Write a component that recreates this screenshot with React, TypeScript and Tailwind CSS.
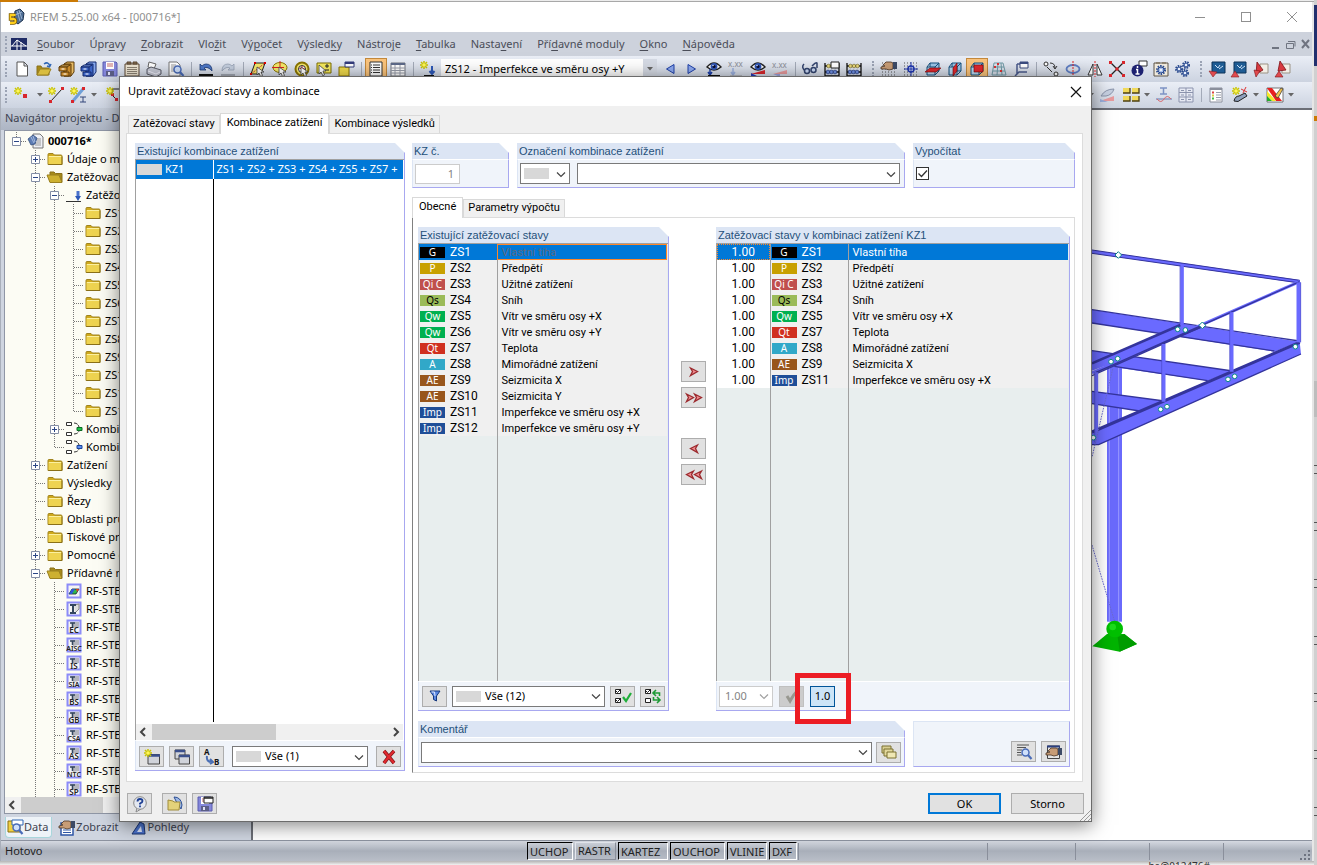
import type { ReactNode } from "react";
import clsx from "clsx";

const NOTO = "font-['Noto_Sans','Open_Sans',sans-serif]";
const ARIAL = "font-['Liberation_Sans',Arial,sans-serif]";
const ROBOTO = "font-['Roboto','Noto_Sans',sans-serif]";

/* ---------- icons ---------- */

const star = (
  <path d="M4 0v8M0 4h8M1 1l6 6M7 1L1 7" stroke="#c9c400" strokeWidth="1.5" />
);

const starBright = (
  <>
    {star}
    <circle cx="4" cy="4" r="1.8" fill="#fff75a" />
  </>
);

const cube = (
  <>
    <path d="M5 2h9v8H5z" fill="#9cc6e8" stroke="#15507e" />
    <path d="M2 6h8v8H2z" fill="#b9d8f0" stroke="#15507e" />
    <path d="M2 6l3-4M10 6l4-4M10 14l4-4" stroke="#15507e" />
  </>
);

const eye = (
  <>
    <path d="M1 6q7-8 14 0q-7 6-14 0z" fill="#fff" stroke="#222" strokeWidth="1.4" />
    <circle cx="8" cy="5.5" r="3.4" fill="#2f55b5" />
    <circle cx="8" cy="5.5" r="1.5" fill="#0a0a2a" />
    <circle cx="7" cy="4.5" r=".8" fill="#cfe0ff" />
  </>
);

/* filing cabinet with an upper drawer pulled out */
const cabinet = (front: string, top: string, line: string) => (
  <>
    <path d="M6 3l3-2h7v10l-3 4H6z" fill={top} stroke={line} />
    <path d="M6 3h7v12H6z" fill={front} stroke={line} />
    <path d="M1 6l3-2h8L9 6z" fill={top} stroke={line} />
    <path d="M1 6h8v4H1z" fill={front} stroke={line} />
    <path d="M3 11h8v4H3z" fill={front} stroke={line} />
    <path d="M3.500 8h3M5.500 13h3" stroke="#fff" strokeWidth="1.200" />
  </>
);

const gear = (x: number, y: number, r: number) => (
  <>
    <circle cx={x} cy={y} r={r} fill="none" stroke="#2b4b8f" strokeWidth="2" strokeDasharray="1.5 1" />
    <circle cx={x} cy={y} r={r - 1} fill="#a9c0ea" stroke="#2b4b8f" />
    <circle cx={x} cy={y} r="1" fill="#fff" />
  </>
);

const floppy = (
  <>
    <path d="M1 1h13l1 1v13H1z" fill="#8487da" stroke="#5a5cb0" />
    <path d="M4 1h8v7H4z" fill="#fff" />
    <path d="M5 3h6M5 5h6" stroke="#c26a6a" />
    <path d="M4 10h8v5H4z" fill="#5b5e86" />
    <path d="M6 11h2v3H6z" fill="#dfe1f5" />
  </>
);

const folder = (
  <>
    <path d="M1 3.500q0-1 1-1h4l1.500 1.500H14q1 0 1 1v8.500H1z" fill="#cfa91c" stroke="#a08420" />
    <path d="M1.500 5h13v8h-13z" fill="#eed350" />
    <path d="M2 5.500h12" stroke="#fbf0a0" />
    <path d="M1.500 13.500h13.500v-8" stroke="#8a7018" />
  </>
);

const folderOpen = (
  <>
    <path d="M3 3h4l1.500 1.500H15V13H3z" fill="#a68a1a" stroke="#8a7018" />
    <path d="M0 6h12l3 7.500H3z" fill="#cdb030" stroke="#9a8020" />
  </>
);

const magnifier = (
  <>
    <circle cx="9.500" cy="8.500" r="3.500" fill="#cfe0fb" stroke="#4a6cb8" strokeWidth="1.500" />
    <path d="M12 11l3.500 4" stroke="#4a6cb8" strokeWidth="2.200" />
  </>
);

const abacus = (
  <>
    <path d="M1 2v14M15 2v14M1 5h14M1 11h14M1 15h14" stroke="#111" strokeWidth="1.300" />
    {[3.5, 7, 10.5].map((x) => (
      <g key={x}>
        <circle cx={x + 1} cy="5" r="1.800" fill="#e8d87a" stroke="#6b6020" strokeWidth=".6" />
        <circle cx={x + 0.5} cy="11" r="1.900" fill="#6f8fe0" stroke="#1c2f70" strokeWidth=".6" />
      </g>
    ))}
  </>
);

const dots = (
  <path d="M1 2h15M1 5h15M1 8h15M1 11h15M1 14h15" stroke="#555" strokeDasharray="1 2" />
);

const hand = (
  <>
    <path d="M5 1h5l2 1v6l-4 1L5 8L0 8V6l4-1l-2-1z" fill="#c79c76" stroke="#4a3423" strokeWidth=".8" />
    <path d="M12 1h4v7h-4z" fill="#3c4a66" />
  </>
);

const cursor = <path d="M7 6v8l2-2l1.500 3.500l2-1L11 11h3z" fill="#fff" stroke="#444" strokeWidth=".8" />;

const ICONS: Record<string, ReactNode> = {
  app: (
    <>
      <path d="M6 2l5-2l4 4l-1 7l-5 4l-4-3z" fill="#4d6c94" stroke="#1f3450" />
      <path d="M8 2l3 10M10 1l3 9M6 6l7-3" stroke="#a9bfda" strokeWidth=".8" />
      <path d="M6.500 6H1.500v4h3.500q1.500 0 1.500 2t-2 2H1" fill="none" stroke="#7a5a00" strokeWidth="3.400" />
      <path d="M6.500 6H1.500v4h3.500q1.500 0 1.500 2t-2 2H1" fill="none" stroke="#ffcf1c" strokeWidth="1.800" />
    </>
  ),
  new: <path d="M3 1h7l3.500 3.500V15H3zM10 1v4h3.500" fill="#fff" stroke="#555" />,
  open: (
    <>
      <path d="M1 5h4l1 2h7v7H1z" fill="#a68a1a" stroke="#8a7018" />
      <path d="M1 14l3-6h11l-3 6z" fill="#d9bd40" stroke="#9a8020" />
      <path d="M8 3q4-3 6 2l1-2M14 6l-3-1" fill="none" stroke="#2f66b5" strokeWidth="1.500" />
    </>
  ),
  cabOrange: cabinet("#c98b2c", "#e8bb64", "#5a3a0a"),
  cabBlue: cabinet("#3b63c4", "#86a8ee", "#13296b"),
  save: floppy,
  clipboard: (
    <>
      <path d="M1 3h14v12H1z" fill="#efe6d3" stroke="#5a4632" />
      <path d="M3 1h4v2H3zM9 1h4v2H9z" fill="#8b7355" stroke="#5a4632" />
      <path d="M3 6.500h10M3 8.500h10M3 10.500h10M3 12.500h10" stroke="#8d8374" />
    </>
  ),
  print: (
    <>
      <path d="M3 1l7 2l-2 5l-6-2z" fill="#fff" stroke="#666" />
      <path d="M1 8l4-2l10 3v4l-5 3L1 13z" fill="#c7cad6" stroke="#5b5d68" />
      <path d="M2 10l8 3l4-2" fill="none" stroke="#f4f4ff" />
    </>
  ),
  preview: (
    <>
      <path d="M1 1h8l3 3v11H1z" fill="#fff" stroke="#777" />
      <path d="M3 4h5M3 6h5M3 8h4M3 10h3" stroke="#999" />
      {magnifier}
    </>
  ),
  undo: (
    <>
      <path d="M2 3v6h6L6 7q4-2 8 3q0-7-6-7q-2 0-4 2z" fill="#4d78c8" stroke="#1d3a75" strokeWidth=".8" />
      <path d="M1 14h14" stroke="#111" strokeWidth="2" />
    </>
  ),
  redo: (
    <>
      <path d="M14 3v6H8l2-2q-4-2-8 3q0-7 6-7q2 0 4 2z" fill="#c5cfdf" stroke="#97a2b5" strokeWidth=".8" />
      <path d="M1 14h14" stroke="#a3a8b3" strokeWidth="2" />
    </>
  ),
  plane: (
    <>
      <path d="M1 13l4-11h10l-4 11z" fill="#f6e96b" stroke="#222" />
      <path d="M1 13l14-11" stroke="#c33" strokeDasharray="2 1" />
      <path d="M4 1h2v2H4zM14 1h2v2h-2zM0 12h2v2H0z" fill="#d00" />
      {cursor}
    </>
  ),
  ellipse: (
    <>
      <ellipse cx="8" cy="6.500" rx="7" ry="5" fill="#f6e96b" stroke="#8a7400" />
      <path d="M8 0v12M0 6.500h12" stroke="#d22" />
      {cursor}
    </>
  ),
  target: (
    <>
      <circle cx="8" cy="8" r="6.500" fill="#f6e96b" stroke="#8a7400" strokeWidth="2" />
      <circle cx="8" cy="8" r="3.500" fill="#fff" stroke="#333" />
      <path d="M8 5v5M5.500 7.500h5" stroke="#d22" />
      {cursor}
    </>
  ),
  rectPm: (
    <>
      <path d="M1 2h14v10H1z" fill="#f6ea5e" stroke="#7a6c00" />
      <path d="M9 5h4M11 3v4M9 9h4" stroke="#222" />
      <path d="M3 4v9l2-2l2 4l1.500-1L7 10h3z" fill="#fff" stroke="#444" strokeWidth=".8" />
    </>
  ),
  winYellow: (
    <>
      <path d="M1 6h10v9H1z" fill="#f0da4c" stroke="#8a7400" />
      <path d="M7 1h9v5H7z" fill="#fff" stroke="#333c7c" />
      <path d="M7 2h9" stroke="#333c7c" strokeWidth="2" />
    </>
  ),
  sheet: (
    <>
      <path d="M2 1h12v14H2z" fill="#fff" stroke="#333" />
      <path d="M5 4h7M5 6.500h7M5 9h7M5 11.500h7" stroke="#333" />
      <path d="M3 4h1M3 6.500h1M3 9h1M3 11.500h1" stroke="#333" />
    </>
  ),
  grid: (
    <>
      <path d="M1 2h14v13H1z" fill="#fff" stroke="#70747f" />
      <path d="M1 3h14" stroke="#5d6a8a" strokeWidth="2" />
      <path d="M1 7h14M1 9.500h14M1 12h14M5 4v11M10 4v11" stroke="#9a9eaa" />
    </>
  ),
  starArrow: (
    <>
      {starBright}
      <path d="M12 5v7M9.500 10l2.500 3l2.500-3" fill="none" stroke="#2d58b8" strokeWidth="2" />
      <path d="M4 14.500h10" stroke="#111" />
    </>
  ),
  triLeft: <path d="M12 3.500L4.500 8l7.500 4.500z" fill="#8eaaf0" stroke="#1d3fa8" />,
  triRight: <path d="M4 3.500L11.500 8L4 12.500z" fill="#8eaaf0" stroke="#1d3fa8" />,
  eyeArrow: (
    <>
      {eye}
      <path d="M4 8v5M2 11l2 3l2-3" stroke="#1d3fa8" strokeWidth="1.500" fill="none" />
      <path d="M2 15h12" stroke="#111" strokeWidth="2" />
    </>
  ),
  xxx: (
    <>
      <text x="0" y="6" fontSize="8" fill="#8b8e96">x.xx</text>
      <path d="M5 7v6M3 11l2 3l2-3" stroke="#9bb0de" strokeWidth="1.500" fill="none" />
      <path d="M2 15h12" stroke="#999" />
    </>
  ),
  eyeRamp: (
    <>
      {eye}
      <path d="M1 16h8l-8-4z" fill="#2338b8" />
      <path d="M1 13h14V9z" fill="#d8262c" />
    </>
  ),
  xxxRamp: (
    <>
      <text x="0" y="7" fontSize="8" fill="#8b8e96">x.xx</text>
      <path d="M1 13h14V9z" fill="#e79a9d" />
      <path d="M1 13h7v3z" fill="#9ba3dc" />
    </>
  ),
  glasses: (
    <>
      <path d="M2 3q-3 3 1 7M10 5q4-4 5-3v5" fill="none" stroke="#33446e" strokeWidth="1.500" />
      <circle cx="5" cy="10" r="2.500" fill="#c9d8f4" stroke="#33446e" strokeWidth="1.500" />
      <circle cx="11.500" cy="9" r="2.500" fill="#c9d8f4" stroke="#33446e" strokeWidth="1.500" />
    </>
  ),
  abacusWin: (
    <>
      {abacus}
      <path d="M7 1h8v6H7z" fill="#fff" stroke="#222" />
    </>
  ),
  abacus,
  handGrid: (
    <>
      {dots}
      {hand}
    </>
  ),
  snap: (
    <>
      {dots}
      <circle cx="8" cy="8" r="3" fill="#e9edfb" stroke="#1d34b0" strokeWidth="1.500" />
      <path d="M8 1v14M1 8h14" stroke="#1d34b0" />
    </>
  ),
  cubeXy: (
    <>
      {cube}
      <path d="M0 11l5-4h11l-5 4z" fill="#e0292f" stroke="#700" strokeWidth=".6" />
    </>
  ),
  cubeXz: (
    <>
      {cube}
      <path d="M6 7l4-5v8l-4 5z" fill="#e0292f" stroke="#700" strokeWidth=".6" />
    </>
  ),
  cubeYz: (
    <>
      {cube}
      <path d="M5 4h9v7H5z" fill="#e0292f" stroke="#700" strokeWidth=".6" />
    </>
  ),
  gridPersp: (
    <>
      <path d="M3 2h9l3 12H1zM7 2l-1 12M2 6h11M2 10h12M10 2l1 12" fill="none" stroke="#6f9aa6" />
      <path d="M3 5h2v2H3zM9 9h2v2H9zM6 2h2v2H6z" fill="#d33" />
    </>
  ),
  structWin: (
    <>
      <path d="M2 15l4-4h8M4 3v10M4 3h4" stroke="#4a5a8c" strokeWidth="1.500" fill="none" />
      <path d="M7 1h8v6H7z" fill="#fff" stroke="#3c4c80" />
      <path d="M7 2h8" stroke="#3c4c80" strokeWidth="2" />
    </>
  ),
  copyRot: (
    <>
      <circle cx="3" cy="3" r="2" fill="#fff" stroke="#333" />
      <circle cx="13" cy="13" r="2" fill="#fff" stroke="#333" />
      <path d="M7 2q5 0 5 5M10 5l2 3l2-3M4 6l5 5" fill="none" stroke="#333" />
    </>
  ),
  rotate: (
    <>
      <ellipse cx="8" cy="8" rx="6.500" ry="4" fill="none" stroke="#5f7fc4" strokeWidth="1.800" />
      <path d="M8 0v16" stroke="#d22" strokeDasharray="2 1" />
    </>
  ),
  mirror: (
    <>
      <path d="M1 14L6 3v11zM15 14L10 3v11z" fill="#fff" stroke="#333" />
      <path d="M8 0v16" stroke="#d22" strokeDasharray="2 1" />
    </>
  ),
  cross: (
    <>
      <path d="M2 2l12 12M14 2L2 14" stroke="#222" strokeWidth="1.300" />
      <path d="M0 0h3v3H0zM13 0h3v3h-3zM0 13h3v3H0zM13 13h3v3h-3zM6.500 6.500h3v3h-3z" fill="#d8262c" />
    </>
  ),
  info: (
    <>
      <path d="M8 0h8v5H8z" fill="#fff" stroke="#333" />
      <circle cx="6.500" cy="9.500" r="6" fill="#1d2170" />
      <path d="M6.500 5v2M5 8.500h1.500v4M4.500 13h4" stroke="#fff" strokeWidth="1.500" fill="none" />
    </>
  ),
  gearPage: (
    <>
      <path d="M1 2h14v13H1z" fill="#efe9dc" stroke="#5d5548" />
      <path d="M3 1h4v2H3zM9 1h4v2H9z" fill="#8b8171" />
      {gear(8, 9, 4)}
    </>
  ),
  gears: (
    <>
      {gear(11, 4, 3)}
      {gear(4, 8, 3)}
      {gear(10, 12, 3)}
    </>
  ),
  screenDown: (
    <>
      <path d="M3 1h13v11H3z" fill="#1e5c94" stroke="#0d3358" />
      <path d="M6 4l3 3l2-3M10 8l4-3" stroke="#cfe3f8" fill="none" />
      <path d="M0 10l8 1l-4 5z" fill="#e04a4e" stroke="#8c1c20" strokeWidth=".6" />
    </>
  ),
  screenUp: (
    <>
      <path d="M3 1h12v11H3z" fill="#1e5c94" stroke="#0d3358" />
      <path d="M6 4l3 3l2-3M10 8l4-3" stroke="#cfe3f8" fill="none" />
      <path d="M0 16l4-6l4 6z" fill="#e04a4e" stroke="#8c1c20" strokeWidth=".6" />
    </>
  ),
  redDown: (
    <>
      <path d="M7 3h8v9H7z" fill="#f2eee6" stroke="#9b9385" />
      <path d="M4 1l6 8l-7 4z" fill="#d83a40" stroke="#7d1216" strokeWidth=".8" />
      <path d="M1 9l6 1l-4 6z" fill="#e04a4e" stroke="#7d1216" strokeWidth=".6" />
    </>
  ),
  redUp: (
    <>
      <path d="M7 3h8v9H7z" fill="#f2eee6" stroke="#9b9385" />
      <path d="M5 0l6 9l-8 1z" fill="#d83a40" stroke="#7d1216" strokeWidth=".8" />
      <path d="M0 16l4-6l4 6z" fill="#e04a4e" stroke="#7d1216" strokeWidth=".6" />
    </>
  ),
  starNode: (
    <>
      {starBright}
      <path d="M9 7h4v4H9z" fill="#d8262c" />
    </>
  ),
  starLine: (
    <>
      <path d="M3 14L14 2" stroke="#222" />
      <path d="M1 13h3v3H1zM13 0h3v3h-3z" fill="#d8262c" />
      {starBright}
    </>
  ),
  starBeam: (
    <>
      <path d="M3 14L13 2" stroke="#6fa0d8" strokeWidth="3" />
      <path d="M1 13h3v3H1zM12 0h3v3h-3z" fill="#d8262c" />
      <path d="M10 10h6M10 15h6M13 10v5" stroke="#33477a" />
      {starBright}
    </>
  ),
  starPoly: (
    <>
      <path d="M6 2h10M6 2v6l5 5" stroke="#222" fill="none" />
      <path d="M9 11h3v3H9zM5 6h3v3H5z" fill="#d8262c" />
      {starBright}
    </>
  ),
  brushRamp: (
    <>
      <path d="M2 9q4-7 13-7q-2 6-8 7z" fill="#c6cfe0" stroke="#8a94aa" />
      <path d="M1 14h14V9z" fill="#e79a9d" />
      <path d="M1 15h8l-8-3z" fill="#9bb0de" />
    </>
  ),
  squares: (
    <>
      <path d="M0 1h7v5H0zM9 1h7v5H9zM0 9h7v5H0zM9 9h7v5H9z" fill="#f0d95a" />
      <path d="M0 6h7V1M9 6h7V1M0 14h7V9M9 14h7V9" stroke="#4d4010" strokeWidth="1.300" />
    </>
  ),
  moment: (
    <>
      <path d="M4 1h7M4 7h7M7.500 1v6" stroke="#7d92c4" strokeWidth="1.500" />
      <path d="M0 12h16" stroke="#6678b0" />
      <path d="M1 12q4 5 7 0t7 0" fill="none" stroke="#d86a6e" />
    </>
  ),
  tableGray: (
    <>
      <path d="M1 1h14v14H1z" fill="#e6e9f3" stroke="#8b93ad" />
      <path d="M8 1v14M1 5.500h14M1 10h14M3 3.500h3M10 3.500h3M3 8h3M10 8h3M3 12.500h3M10 12.500h3" stroke="#8b93ad" />
    </>
  ),
  listColor: (
    <>
      <path d="M2 1h12v14H2z" fill="#fff" stroke="#8a8f9c" />
      <path d="M2 2h12" stroke="#8a8f9c" strokeWidth="2" />
      <path d="M8 5.500h5M8 8h5M8 10.500h5M8 13h5" stroke="#9aa0ad" />
      <path d="M4 5.500h2" stroke="#d44" strokeWidth="2" />
      <path d="M4 8.500h2" stroke="#dc4" strokeWidth="2" />
      <path d="M4 11.500h2" stroke="#4b4" strokeWidth="2" />
    </>
  ),
  brushStar: (
    <>
      <path d="M2 14q1-5 5-5l6-3l2 3l-5 3q-4 4-8 2z" fill="#8ea0bd" stroke="#222" />
      <path d="M9 2l6 3M14 0l-3 6" stroke="#d33" />
      {starBright}
    </>
  ),
  palette: (
    <>
      <path d="M0 1h16v14H0z" fill="#fff" stroke="#555" strokeWidth=".8" />
      <path d="M0 1h5l10 13h-6z" fill="#e82020" />
      <path d="M0 4l9 10H5L0 9z" fill="#f5e72a" />
      <path d="M0 9l5 5H0z" fill="#22b02a" />
      <path d="M8 9l6-8l2 1l-5 9z" fill="#f2c24c" stroke="#333" strokeWidth=".7" />
    </>
  ),
  rootDoc: (
    <>
      <path d="M5 1h7l3 3v11H5z" fill="#eef0f5" stroke="#777" />
      <path d="M7 10h6M7 12h6M9 6h4M9 8h4" stroke="#999" />
      <path d="M0 6l5-4l4 3l-2 6l-4 1z" fill="#5c7cb4" stroke="#35507f" strokeWidth=".8" />
      <path d="M3 4l3 6M5 3l2 6" stroke="#b7c9e6" strokeWidth=".8" />
    </>
  ),
  loadCase: (
    <>
      <path d="M12 4v6" stroke="#4a72cc" strokeWidth="3" />
      <path d="M9 9h6l-3 5z" fill="#2d58b8" />
      <path d="M0 14.500h15" stroke="#333" />
    </>
  ),
  comboGreen: (
    <>
      <path d="M0.500 1.500h5v3h-5zM0.500 11.500h5v3h-5z" fill="#fff" stroke="#333" />
      <path d="M8 2q4 0 5 4M8 13q4 0 5-3" fill="none" stroke="#333" strokeDasharray="4 1" />
      <path d="M11 6.500h5v3h-5z" fill="#1fc24a" stroke="#0a6b22" />
    </>
  ),
  comboBlue: (
    <>
      <path d="M0.500 1.500h5v3h-5zM0.500 11.500h5v3h-5z" fill="#fff" stroke="#333" />
      <path d="M8 2q4 0 5 4M8 13q4 0 5-3" fill="none" stroke="#333" strokeDasharray="4 1" />
      <path d="M11 6.500h5v3h-5z" fill="#5c8df0" stroke="#1b459c" />
    </>
  ),
  folder,
  folderOpen,
  tabData: (
    <>
      <path d="M1 2h5l1 2h6v9H1z" fill="#f0d043" stroke="#8a6e10" />
      <path d="M5 1h11v5H5z" fill="#fff" stroke="#2f66b5" />
      {magnifier}
    </>
  ),
  tabView: (
    <>
      <path d="M2 3h12v12H2z" fill="#fff" stroke="#2f56a5" strokeWidth="1.500" />
      <path d="M4 10h8M4 12.500h8" stroke="#2f56a5" />
      {hand}
    </>
  ),
  tabCam: (
    <>
      <path d="M1 14l8-12l4 2l1 10z" fill="#4a72cc" stroke="#1b346f" />
      <path d="M6 12l4-6l1 6z" fill="#dfe8fb" />
    </>
  ),
  help: (
    <>
      <path d="M5 12l-1 4l5-3" fill="#eef1f7" stroke="#888" />
      <circle cx="8" cy="7" r="6.300" fill="#e4e8f0" stroke="#888" />
      <path d="M5.500 5.500q0-2.500 2.500-2.500t2.500 2q0 1.500-2.500 2.500v1M8 9.500v1.800" fill="none" stroke="#1e3f93" strokeWidth="1.800" />
    </>
  ),
  openDlg: (
    <>
      <path d="M7 1q7 0 8 8l-1 4l-5-8z" fill="#9db8e6" stroke="#2d4f94" />
      <path d="M1 4l5 1l1 1h6l-1 8H1z" fill="#e3d27a" stroke="#a08c3a" />
    </>
  ),
  saveDlg: (
    <>
      {floppy}
      <path d="M7 1h9v6H7z" fill="#fff" stroke="#222" />
      <path d="M7 2h9" stroke="#222" strokeWidth="1.500" />
    </>
  ),
  newWin: (
    <>
      <path d="M4 5.500h11.500v9.500H4z" fill="#d0d3da" stroke="#444" />
      <path d="M4 6.500h12" stroke="#3a4f8c" strokeWidth="2.500" />
      {starBright}
    </>
  ),
  copyWin: (
    <>
      <path d="M1 1h10v9H1z" fill="#d0d3da" stroke="#444" />
      <path d="M1 2h10" stroke="#3a4f8c" strokeWidth="2.500" />
      <path d="M5 6h10.500v9H5z" fill="#d0d3da" stroke="#444" />
      <path d="M5 7h11" stroke="#3a4f8c" strokeWidth="2.500" />
    </>
  ),
  renumber: (
    <>
      <text x="0" y="6" fontSize="8" fontWeight="700" fill="#111">A</text>
      <text x="10" y="16" fontSize="8" fontWeight="700" fill="#111">B</text>
      <path d="M3 7q-1 6 5 6M6 10l3 3l-3 2" fill="none" stroke="#4a6fb5" strokeWidth="2" />
    </>
  ),
  del: (
    <>
      <path d="M3 2l10 12M13 2Q8 7 3 14" stroke="#7d1216" strokeWidth="3.600" />
      <path d="M3 2l10 12M13 2Q8 7 3 14" stroke="#e0292f" strokeWidth="2.200" />
    </>
  ),
  funnel: (
    <>
      <path d="M3 3h10l-3.500 5v5l-3-1.500V8z" fill="#5a86e0" stroke="#16397f" />
      <path d="M4.500 4h3l.5 4" stroke="#dfe9ff" />
    </>
  ),
  checkAll: (
    <>
      <path d="M.5 1.500h5v4h-5zM.5 10.500h5v4h-5z" fill="#fff" stroke="#222" />
      <path d="M1 3l1.500 1.500L6 1M1 12l1.500 1.500L6 10" fill="none" stroke="#222" />
      <path d="M8 9l3 4l5-8" fill="none" stroke="#1fae3a" strokeWidth="2.200" />
    </>
  ),
  invert: (
    <>
      <path d="M.5 1.500h5v4h-5zM.5 10.500h5v4h-5z" fill="#fff" stroke="#222" />
      <path d="M1 3l1.500 1.500L6 1" fill="none" stroke="#222" />
      <path d="M14.500 8V5H9m2-3L8 5l3 3M8.500 9v3H14m-2-3l3 3l-3 3" fill="none" stroke="#1f9a36" strokeWidth="1.600" />
    </>
  ),
  checkGray: <path d="M3 8l3 5Q9 7 14 2" fill="none" stroke="#989890" strokeWidth="3" />,
  library: (
    <>
      <path d="M1 2h9v7H1z" fill="#d9cf92" stroke="#7a7030" />
      <path d="M3 5h9v7H3z" fill="#e2d89c" stroke="#7a7030" />
      <path d="M6 8h9v6H6z" fill="#efe7b4" stroke="#7a7030" />
    </>
  ),
  detail: (
    <>
      <path d="M1 1h12M1 3.500h9M1 6h5M1 8.500h4M1 11h5" stroke="#555" />
      {magnifier}
    </>
  ),
  handWin: (
    <>
      <path d="M1.500 2h12v12.500h-12z" fill="#e4e4e4" stroke="#444" />
      <path d="M1 2.500h13" stroke="#2b3f80" strokeWidth="2" />
      <g transform="translate(0 3)">{hand}</g>
    </>
  ),
  right1: <path d="M4.500 4l7 3.500l-7 4l2-4z" fill="#f08c90" stroke="#9c2a2e" strokeWidth="1.300" />,
  right2: (
    <path d="M.5 4l7 3.500l-7 4l2-4zM8.500 4l7 3.500l-7 4l2-4z" fill="#f08c90" stroke="#9c2a2e" strokeWidth="1.300" />
  ),
  left1: <path d="M11.500 4l-7 3.500l7 4l-2-4z" fill="#f08c90" stroke="#9c2a2e" strokeWidth="1.300" />,
  left2: (
    <path d="M15.500 4l-7 3.500l7 4l-2-4zM7.500 4l-7 3.500l7 4l-2-4z" fill="#f08c90" stroke="#9c2a2e" strokeWidth="1.300" />
  ),
};

function Icon({ name }: { name: string }) {
  return (
    <svg viewBox="0 0 16 16" fill="none" className="h-4 w-4 shrink-0 overflow-visible" aria-hidden="true">
      {ICONS[name]}
    </svg>
  );
}

/* ---------- toolbars ---------- */

const Sep = () => <span className="mr-[3px] ml-1 h-[14px] w-px shrink-0 bg-[#a3aab8]" />;
const Grip = () => <span className="mx-1 h-4 w-0 shrink-0 border-l-2 border-dotted border-[#9ba3b4]" />;

function Drop() {
  return (
    <svg viewBox="0 0 10 6" className="w-[10px] shrink-0" aria-hidden="true">
      <path d="M2 1h6L5 4.500z" fill="#666" />
    </svg>
  );
}

function Tool({ name, active }: { name: string; active?: boolean }) {
  return (
    <button
      aria-label={name}
      className={clsx(
        "flex h-[22px] w-[22px] shrink-0 items-center justify-center",
        active && "border border-[#c58a3c] bg-[#fbc47c]",
      )}
    >
      <Icon name={name} />
    </button>
  );
}

const Tools = ({ names, active }: { names: string[]; active?: string }) => (
  <>
    {names.map((n) => (
      <Tool key={n} name={n} active={n === active} />
    ))}
  </>
);

const BAR = "flex h-[26px] shrink-0 items-center bg-linear-to-b from-[#eaeef6] to-[#ccd3e0]";

function MainToolbar() {
  return (
    <div className={BAR}>
      <Grip />
      <Tools names={["new", "open", "cabOrange", "cabBlue", "save", "clipboard", "print", "preview"]} />
      <Sep />
      <Tools names={["undo", "redo"]} />
      <Sep />
      <Tools names={["plane", "ellipse", "target", "rectPm", "winYellow"]} />
      <Sep />
      <Tools names={["sheet", "grid"]} active="sheet" />
      <Sep />
      <Tool name="starArrow" />
      <div className="relative mx-[2px] flex h-[21px] w-[216px] shrink-0 items-center bg-white">
        <select
          aria-label="Zatěžovací stav"
          className="h-full w-full appearance-none border border-white pl-[3px] text-[11px] text-black"
        >
          <option>ZS12 - Imperfekce ve směru osy +Y</option>
        </select>
        <span className="pointer-events-none absolute right-0 flex h-full w-[14px] items-center justify-center bg-[#d5dae4]">
          <Drop />
        </span>
      </div>
      <Tools names={["triLeft", "triRight", "eyeArrow", "xxx", "eyeRamp", "xxxRamp"]} />
      <Sep />
      <Tools names={["glasses", "abacusWin", "abacus"]} />
      <span className="w-[3px] shrink-0" />
      <Grip />
      <Tools names={["handGrid", "snap", "cubeXy", "cubeXz", "cubeYz", "gridPersp", "structWin"]} active="cubeYz" />
      <Sep />
      <Tools names={["copyRot", "rotate", "mirror", "cross", "info", "gearPage", "gears"]} />
      <span className="w-[2px] shrink-0" />
      <Grip />
      <Tools names={["screenDown", "screenUp", "redDown", "redUp"]} />
    </div>
  );
}

function ObjectToolbar() {
  return (
    <div className={clsx(BAR, "justify-between pr-4")}>
      <div className="flex items-center">
        <Grip />
        <Tool name="starNode" />
        <span className="w-[2px]" />
        <Drop />
        <Tool name="starLine" />
        <Tool name="starBeam" />
        <Drop />
        <span className="w-1" />
        <Tool name="starPoly" />
      </div>
      <div className="flex items-center">
        <Drop />
        <Tool name="brushRamp" />
        <span className="w-[2px]" />
        <Tool name="squares" />
        <Drop />
        <span className="w-px" />
        <Tool name="moment" />
        <Tool name="tableGray" />
        <Sep />
        <Tool name="listColor" />
        <span className="w-[2px]" />
        <Tool name="brushStar" />
        <Drop />
        <span className="w-[3px]" />
        <Tool name="palette" />
        <Drop />
      </div>
    </div>
  );
}

/* [text before, underlined letter, text after] */
const MENU = [
  ["", "S", "oubor"],
  ["Úpr", "a", "vy"],
  ["", "Z", "obrazit"],
  ["Vlo", "ž", "it"],
  ["Vý", "p", "očet"],
  ["Výsled", "k", "y"],
  ["Nástro", "j", "e"],
  ["", "T", "abulka"],
  ["Nasta", "v", "ení"],
  ["Pří", "d", "avné moduly"],
  ["", "O", "kno"],
  ["", "N", "ápověda"],
];

function TitleAndMenu() {
  return (
    <>
      <header className="flex h-[30px] shrink-0 items-center bg-white pl-2 text-[#909090]">
        <Icon name="app" />
        <h1 className="ml-[5px] flex-1 text-[11px]">RFEM 5.25.00 x64 - [000716*]</h1>
        <button aria-label="Minimalizovat" className="flex w-[46px] justify-center">
          <span className="h-px w-[10px] bg-[#909090]" />
        </button>
        <button aria-label="Maximalizovat" className="mr-[3px] flex w-[46px] justify-center">
          <span className="h-[10px] w-[10px] border border-[#909090]" />
        </button>
        <button aria-label="Zavřít" className="flex w-10 justify-center">
          <svg viewBox="0 0 10 10" className="w-[10px]" stroke="#909090">
            <path d="M0 0l10 10M10 0L0 10" />
          </svg>
        </button>
      </header>
      <nav className="flex h-6 shrink-0 items-center bg-[#cdd2dc] text-[11px] text-[#4a4d58]">
        <Grip />
        <svg viewBox="0 0 16 12" className="mr-[10px] w-4" aria-hidden="true">
          <path d="M0 0h16v12H0z" fill="#202c66" />
          <path d="M0 8h16M1 8l5-6v10M6 2l9 6M10 4v8" stroke="#fff" fill="none" />
        </svg>
        <div className="flex flex-1 gap-[15px]">
          {MENU.map(([a, b, c]) => (
            <button key={a + b + c} className="whitespace-nowrap">
              {a}
              <span className="underline underline-offset-2">{b}</span>
              {c}
            </button>
          ))}
        </div>
        <svg viewBox="0 0 42 10" className="mr-px w-[42px]" fill="none" stroke="#6f7480" aria-hidden="true">
          <path d="M3 9h7" strokeWidth="2" />
          <path d="M19 2.500h7v5M17.500 4.500h7v5h-7z" />
          <path d="M33 1l7 8M40 1l-7 8" strokeWidth="2" />
        </svg>
      </nav>
    </>
  );
}

/* ---------- navigator ---------- */

type Node = { level: number; label: string; icon: string; box?: "+" | "-"; last?: boolean; bold?: boolean };

const TREE: Node[] = [
  { level: 0, label: "000716*", icon: "rootDoc", box: "-", bold: true, last: true },
  { level: 1, label: "Údaje o modelu", icon: "folder", box: "+" },
  { level: 1, label: "Zatěžovací stavy", icon: "folderOpen", box: "-" },
  { level: 2, label: "Zatěžovací stavy", icon: "loadCase", box: "-" },
  ...Array.from({ length: 12 }, (_, i) => ({
    level: 3,
    label: `ZS${i + 1}`,
    icon: "folder",
    last: i === 11,
  })),
  { level: 2, label: "Kombinace zatížení", icon: "comboGreen", box: "+" },
  { level: 2, label: "Kombinace výsledků", icon: "comboBlue", last: true },
  { level: 1, label: "Zatížení", icon: "folder", box: "+" },
  { level: 1, label: "Výsledky", icon: "folder" },
  { level: 1, label: "Řezy", icon: "folder" },
  { level: 1, label: "Oblasti průměrů", icon: "folder" },
  { level: 1, label: "Tiskové protokoly", icon: "folder" },
  { level: 1, label: "Pomocné objekty", icon: "folder", box: "+" },
  { level: 1, label: "Přídavné moduly", icon: "folderOpen", box: "-" },
  ...["", "I", "EC", "AISC", "IS", "SIA", "BS", "GB", "CSA", "AS", "NTC", "SP"].map((m) => ({
    level: 2,
    label: `RF-STEEL ${m}`,
    icon: `module:${m}`,
  })),
];

function ModuleIcon({ code }: { code: string }) {
  return (
    <svg viewBox="0 0 16 16" className="h-4 w-4 shrink-0" aria-hidden="true">
      <path d="M1.500 1.500h13v13h-13z" fill="#f4f4f4" stroke="#8c8cf8" strokeWidth="2" />
      {code === "" ? (
        <>
          <path d="M3 11l3-5h7l-3 5z" fill="#2fb84a" stroke="#123" strokeWidth=".8" />
          <path d="M6 6h3l-3 5H3z" fill="#2d58d8" />
          <path d="M10 6h3l-2 3z" fill="#e83a20" />
        </>
      ) : code === "I" ? (
        <>
          <path d="M8 4l5-1v5l-4 4" fill="#ddd" stroke="#888" />
          <path d="M4 4h6M7 4v8M4 12h6" stroke="#34465e" strokeWidth="2" />
        </>
      ) : (
        <>
          <path d="M5 3h8v5L7 9z" fill="#b4b6be" />
          <path d="M4 4h5M6.500 4v4" stroke="#34465e" strokeWidth="1.500" />
          <text x="8" y="14" textAnchor="middle" fontSize={code.length > 2 ? 7 : 8} fontWeight="600" fill="#222">
            {code}
          </text>
        </>
      )}
    </svg>
  );
}

function TreeRow({ node }: { node: Node }) {
  const { level, box, last } = node;
  return (
    <li className={clsx("flex h-[18px] items-center whitespace-nowrap", node.bold && "font-bold")}>
      {Array.from({ length: level }, (_, k) => (
        <svg key={k} viewBox="0 0 19 18" className="w-[19px] shrink-0" aria-hidden="true">
          {k > 0 && <path d="M9.500 0v18" stroke="#777" strokeDasharray="1 1" />}
        </svg>
      ))}
      <svg viewBox="0 0 21 18" className="w-[21px] shrink-0" fill="none" aria-hidden="true">
        <path d={last ? "M9.500 0v10" : "M9.500 0v18"} stroke="#777" strokeDasharray="1 1" />
        <path d="M10 9.500h10" stroke="#777" strokeDasharray="1 1" />
        {box && (
          <>
            <path d="M5.500 5.500h8v8h-8z" fill="#fff" stroke="#848ea6" />
            <path d={box === "+" ? "M7 9.500h5M9.500 7v5" : "M7 9.500h5"} stroke="#2b4686" />
          </>
        )}
      </svg>
      {node.icon.startsWith("module:") ? <ModuleIcon code={node.icon.slice(7)} /> : <Icon name={node.icon} />}
      <span className="ml-1">{node.label}</span>
    </li>
  );
}

function Navigator() {
  return (
    <aside className="flex w-[250px] shrink-0 flex-col bg-[#cfd5e0] text-[11px]">
      <h2 className="h-[22px] shrink-0 bg-linear-to-b from-[#c3cad6] to-[#adb5c4] pl-1 leading-[20px] text-[#3d4250]">
        Navigátor projektu - Data
      </h2>
      <div className="ml-[3px] flex flex-1 flex-col overflow-hidden border border-[#8f96a5] bg-[#fcfcf4]">
        <ul className="flex-1 overflow-hidden pt-px pl-[2px] text-black">
          {TREE.map((n, i) => (
            <TreeRow key={i} node={n} />
          ))}
        </ul>
        <div className="flex h-4 shrink-0 items-center bg-[#f0f0f0]">
          <Chevron dir="left" />
          <span className="h-full w-[82px] bg-[#cdcdcd]" />
        </div>
      </div>
      <div className="flex h-[26px] shrink-0 items-start gap-[2px] pt-[3px] pl-1 text-[#3d4250]">
        {[
          ["tabData", "Data"],
          ["tabView", "Zobrazit"],
          ["tabCam", "Pohledy"],
        ].map(([icon, label], i) => (
          <button
            key={icon}
            className={clsx(
              "flex h-[21px] items-center gap-px px-px",
              i === 0 && "mr-1 rounded-b border border-t-0 border-[#a9d6dc] bg-[#eef3f8] pr-[3px]",
              i === 1 && "mr-2",
            )}
          >
            <Icon name={icon} />
            {label}
          </button>
        ))}
      </div>
    </aside>
  );
}

/* ---------- model view ---------- */

const HINGES = [
  [350, 301], [373, 303], [150, 398], [170, 389], [501, 451], [521, 442],
  [299, 541], [318, 533], [703, 353], [97, 626],
];

function Beam({ points, dark }: { points: string; dark?: string }) {
  return (
    <>
      <polygon points={points} fill="#6a6aff" />
      {dark && <path d={dark} stroke="#34349c" strokeWidth="4" fill="none" />}
    </>
  );
}

function ModelView() {
  return (
    <main className="flex flex-1 justify-end overflow-hidden border-t-2 border-l-2 border-[#6b6e76] bg-white">
      <svg viewBox="93 0 660 1320" fill="none" className="mt-[119px] h-[440px] w-[220px] shrink-0">
        <rect x="138" y="400" width="45" height="778" fill="#6a6afc" />
        <path d="M145 400v776M173 400v776" stroke="#9c9cff" strokeWidth="3" />
        <Beam points="93,242 715,338 640,368 93,282" dark="M93 242L715 336M93 282L640 366" />
        <Beam points="93,365 515,426 440,455 93,405" dark="M93 365L515 426M160 412L440 455" />
        <Beam points="93,487 310,516 236,546 93,524" dark="M93 487L310 516M93 524L236 546" />
        <Beam points="93,402 358,286 425,293 205,384 93,425" dark="M205 384L425 293" />
        <path d="M93 403L358 288" stroke="#34349c" strokeWidth="8" />
        <Beam points="93,606 716,338 720,375 113,647 93,647" dark="M720 375L113 647H93" />
        <path d="M93 609L716 340" stroke="#34349c" strokeWidth="9" />
        <path d="M93 68L716 158" stroke="#6a6aff" strokeWidth="10" />
        <path d="M93 63L716 154M93 73L716 162" stroke="#34349c" strokeWidth="3" />
        <path d="M93 432L716 158" stroke="#6a6aff" strokeWidth="9" />
        <path d="M105 430L716 158M93 440L430 290" stroke="#34349c" strokeWidth="4" />
        <path d="M363 108V286M512 250V428M308 345V518M106 430V640" stroke="#6a6aff" strokeWidth="11" />
        <path d="M713 160V340" stroke="#6a6aff" strokeWidth="13" />
        <path d="M357 108V286M506 250V428M302 345V518M101 430V640M719 160V340" stroke="#4848c8" strokeWidth="2" />
        <path d="M155 420L93 685M93 948L160 1175" stroke="#6a6ad0" strokeWidth="3" strokeDasharray="5 3" />
        <path d="M94 1252L138 1215H190L228 1245L176 1268z" fill="#00b400" />
        <path d="M190 1215L228 1245L176 1268L170 1225z" fill="#009c00" />
        <circle cx="161" cy="1200" r="25" fill="#00c000" />
        <circle cx="155" cy="1194" r="10" fill="#1cdc1c" />
        {HINGES.map(([x, y]) => (
          <circle key={x} cx={x} cy={y} r="7" fill="#fff" stroke="#0c8a8a" strokeWidth="3" />
        ))}
        <path d="M172 68l10 10l-10 10l-10-10zM424 279l10 10l-10 10l-10-10z" fill="#fff" stroke="#0c8a8a" strokeWidth="3" />
      </svg>
    </main>
  );
}

/* ---------- dialog parts ---------- */

function Chevron({ dir, light }: { dir: "left" | "right" | "down"; light?: boolean }) {
  const d = { left: "M9 4L5 8l4 4", right: "M7 4l4 4l-4 4", down: "M4 6.500L8 10.500L12 6.500" }[dir];
  return (
    <svg viewBox="0 0 16 16" className="w-4 shrink-0" fill="none" aria-hidden="true">
      <path d={d} stroke={light ? "#a0a0a0" : "#444"} strokeWidth={dir === "down" ? 1.2 : 2} />
    </svg>
  );
}

function Group({
  title,
  list,
  className,
  children,
}: {
  title?: string;
  list?: boolean;
  className?: string;
  children: ReactNode;
}) {
  return (
    <section className={clsx("flex min-w-0 flex-col", className)}>
      {title && (
        <h3
          className={clsx(
            ARIAL,
            "h-4 shrink-0 overflow-hidden border-r border-[#a8a8f0] bg-[#dce5f4] pl-[2px] text-[11px] leading-4 whitespace-nowrap text-[#24507a]",
            "[clip-path:polygon(0_0,calc(100%-10px)_0,100%_10px,100%_100%,0_100%)]",
          )}
        >
          {title}
        </h3>
      )}
      <div
        className={clsx(
          "flex min-h-0 flex-1 border-r border-b border-r-[#a8a8f0] border-b-[#a8a8f0] bg-[#f0f4fa]",
          list ? "flex-col" : "items-center border-t border-l border-l-[#dce5f4]",
          !list && (title ? "border-t-white" : "border-t-[#dce5f4]"),
        )}
      >
        {children}
      </div>
    </section>
  );
}

function IconButton({ name, label, disabled }: { name: string; label: string; disabled?: boolean }) {
  return (
    <button
      aria-label={label}
      disabled={disabled}
      className={clsx(
        "flex h-[21px] w-[25px] shrink-0 items-center justify-center border",
        disabled ? "border-[#c0c0c0] bg-[#cccccc]" : "border-[#adadad] bg-[#e1e1e1]",
      )}
    >
      <Icon name={name} />
    </button>
  );
}

function Combo({
  label,
  value,
  swatch,
  disabled,
  className,
}: {
  label: string;
  value?: string;
  swatch?: boolean;
  disabled?: boolean;
  className?: string;
}) {
  return (
    <div
      className={clsx(
        "relative flex h-[21px] items-center border bg-white",
        disabled ? "border-[#cccccc]" : "border-[#7a7a7a]",
        className,
      )}
    >
      {swatch && <span className="pointer-events-none absolute left-[3px] h-[11px] w-[25px] bg-[#d8d8d8]" />}
      <select
        aria-label={label}
        disabled={disabled}
        className={clsx(
          "h-full w-full appearance-none text-[11px]",
          swatch ? "pl-[32px]" : "pl-[5px]",
          disabled ? "text-[#838383]" : "text-black",
        )}
      >
        <option>{value}</option>
      </select>
      <span className="pointer-events-none absolute right-0">
        <Chevron dir="down" light={disabled} />
      </span>
    </div>
  );
}

function Tabs({ items, active }: { items: string[]; active: string }) {
  return (
    <div role="tablist" className={clsx(ROBOTO, "flex h-5 shrink-0 items-end text-[11px]")}>
      {items.map((t) => (
        <button
          key={t}
          role="tab"
          aria-selected={t === active}
          className={clsx(
            "whitespace-nowrap border border-b-0 border-[#d9d9d9]",
            t === active ? "z-10 -mb-px h-[21px] bg-white px-[6px] pb-[2px]" : "h-[18px] bg-[#f0f0f0] px-[4px]",
          )}
        >
          {t}
        </button>
      ))}
    </div>
  );
}

type Case = [badge: string, color: string, code: string, name: string];

const CASES: Case[] = [
  ["G", "bg-black text-white", "ZS1", "Vlastní tíha"],
  ["P", "bg-[#c8a000] text-white", "ZS2", "Předpětí"],
  ["Qi C", "bg-[#c0504d] text-white", "ZS3", "Užitné zatížení"],
  ["Qs", "bg-[#9bbb59] text-black", "ZS4", "Sníh"],
  ["Qw", "bg-[#00b050] text-white", "ZS5", "Vítr ve směru osy +X"],
  ["Qw", "bg-[#00b050] text-white", "ZS6", "Vítr ve směru osy +Y"],
  ["Qt", "bg-[#d03020] text-white", "ZS7", "Teplota"],
  ["A", "bg-[#31a8c8] text-white", "ZS8", "Mimořádné zatížení"],
  ["AE", "bg-[#98561c] text-white", "ZS9", "Seizmicita X"],
  ["AE", "bg-[#98561c] text-white", "ZS10", "Seizmicita Y"],
  ["Imp", "bg-[#1f4e98] text-white", "ZS11", "Imperfekce ve směru osy +X"],
  ["Imp", "bg-[#1f4e98] text-white", "ZS12", "Imperfekce ve směru osy +Y"],
];

const IN_COMBINATION = ["ZS1", "ZS2", "ZS3", "ZS4", "ZS5", "ZS7", "ZS8", "ZS9", "ZS11"];

function CaseTable({ label, cases, factor }: { label: string; cases: Case[]; factor?: string }) {
  return (
    <div className="grid min-h-0 flex-1 border-t border-l border-[#a0a0a0] bg-[#e8eeee] pr-px">
      <table
        aria-label={label}
        className={clsx(ROBOTO, "h-full w-full table-fixed border-collapse text-[11px] leading-[15px] text-black")}
      >
        <colgroup>
          {factor && <col className="w-[53px]" />}
          <col className="w-[78px]" />
          <col />
        </colgroup>
        <tbody>
          {cases.map(([badge, color, code, name], i) => (
            <tr key={code} className={clsx("h-4", i === 0 ? "bg-[#0078d7] text-white" : "bg-[#f0f0f0]")}>
              {factor && (
                <td
                  className={clsx(
                    "border-r border-[#a0a0a0] p-0 text-center text-[12px]",
                    i === 0 ? "outline-1 -outline-offset-1 outline-dotted outline-[#ff8728]" : "bg-white",
                  )}
                >
                  {factor}
                </td>
              )}
              <td className="border-r border-[#a0a0a0] p-0">
                <div className="flex items-center pl-px text-[12px]">
                  <span className={clsx(NOTO, "h-[11px] w-[25px] text-center text-[10px] leading-[11px]", color)}>
                    {badge}
                  </span>
                  <span className="ml-[5px]">{code}</span>
                </div>
              </td>
              <td
                className={clsx(
                  "overflow-hidden p-0 pl-1 whitespace-nowrap",
                  i === 0 && !factor && "text-[#5f6a80] outline-1 -outline-offset-1 outline-[#ff8728]",
                )}
              >
                {name}
              </td>
            </tr>
          ))}
          <tr aria-hidden="true">
            {factor && <td className="border-r border-[#a0a0a0]" />}
            <td className="border-r border-[#a0a0a0]" />
            <td />
          </tr>
        </tbody>
      </table>
    </div>
  );
}

const FOOT = "flex shrink-0 items-center border-t border-l border-t-white border-l-[#dce5f4]";

function CombinationList() {
  return (
    <Group title="Existující kombinace zatížení" list className="mb-[2px] w-[270px] shrink-0">
      <div className="flex min-h-0 flex-1 flex-col border-t border-l border-[#a0a0a0] bg-white pr-px">
        <div className="grid min-h-0 flex-1">
          <table aria-label="Kombinace zatížení" className="h-full w-full table-fixed border-collapse text-[11px]">
            <colgroup>
              <col className="w-[77px]" />
              <col />
            </colgroup>
            <tbody>
              <tr className="h-[19px] bg-[#0078d7] text-white">
                <td className="border-r border-white p-0">
                  <div className="flex items-center gap-[3px] pl-px">
                    <span className="h-[11px] w-[25px] bg-[#d8d8d8]" />
                    KZ1
                  </div>
                </td>
                <td className="overflow-hidden p-0 pl-[3px] whitespace-nowrap">
                  ZS1 + ZS2 + ZS3 + ZS4 + ZS5 + ZS7 +
                </td>
              </tr>
              <tr aria-hidden="true">
                <td className="border-r border-black" />
                <td />
              </tr>
            </tbody>
          </table>
        </div>
        <div className="mt-[2px] flex h-4 shrink-0 items-center justify-between bg-[#f0f0f0]">
          <Chevron dir="left" />
          <span className="mr-auto h-full w-[124px] bg-[#cdcdcd]" />
          <Chevron dir="right" />
        </div>
      </div>
      <div className={clsx(FOOT, "h-[30px] px-[3px] pt-[2px]")}>
        <IconButton name="newWin" label="Nová kombinace" />
        <span className="w-[5px]" />
        <IconButton name="copyWin" label="Kopírovat kombinaci" />
        <span className="w-[5px]" />
        <IconButton name="renumber" label="Přečíslovat" />
        <Combo label="Filtr kombinací" value="Vše (1)" swatch className="mx-2 flex-1" />
        <IconButton name="del" label="Smazat" />
      </div>
    </Group>
  );
}

function GeneralPage() {
  return (
    <div className="flex min-h-0 flex-1 flex-col gap-[10px] border border-[#dcdcdc] border-l-[#808080] bg-white pt-[9px] pr-1 pb-[5px] pl-[5px]">
      <div className="grid min-h-0 flex-1 grid-cols-[251fr_47px_354fr]">
        <Group title="Existující zatěžovací stavy" list>
          <CaseTable label="Existující zatěžovací stavy" cases={CASES} />
          <div className={clsx(FOOT, "h-[29px] gap-[5px] px-[3px]")}>
            <IconButton name="funnel" label="Filtr" />
            <Combo label="Filtr zatěžovacích stavů" value="Vše (12)" swatch className="flex-1" />
            <IconButton name="checkAll" label="Vybrat vše" />
            <IconButton name="invert" label="Invertovat výběr" />
          </div>
        </Group>
        <div className="flex flex-col items-center gap-[5px] pt-[134px] pl-[2px]">
          <IconButton name="right1" label="Přidat" />
          <IconButton name="right2" label="Přidat vše" />
          <span className="h-5" />
          <IconButton name="left1" label="Odebrat" />
          <IconButton name="left2" label="Odebrat vše" />
        </div>
        <Group title="Zatěžovací stavy v kombinaci zatížení KZ1" list>
          <CaseTable
            label="Zatěžovací stavy v kombinaci zatížení KZ1"
            cases={CASES.filter((c) => IN_COMBINATION.includes(c[2]))}
            factor="1.00"
          />
          <div className={clsx(FOOT, "h-[29px] gap-[6px] px-[2px]")}>
            <Combo label="Součinitel" value="1.00" disabled className="w-[54px]" />
            <IconButton name="checkGray" label="Použít součinitel" disabled />
            <div className="relative z-10">
              <button className="block h-[21px] w-[25px] border border-[#005499] bg-[#cce4f7] text-[11px] text-black">
                1.0
              </button>
              <span className="pointer-events-none absolute -top-[13px] -right-[16px] -bottom-[17px] -left-[15px] border-[5px] border-[#ec1c24]" />
            </div>
          </div>
        </Group>
      </div>
      <div className="flex h-[46px] shrink-0 gap-2">
        <Group title="Komentář" className="flex-1">
          <Combo label="Komentář" className="mr-1 ml-[2px] flex-1" />
          <span className="mr-[3px]">
            <IconButton name="library" label="Knihovna komentářů" />
          </span>
        </Group>
        <Group className="w-[157px] shrink-0">
          <div className="flex flex-1 justify-end gap-[5px] self-end pr-[3px] pb-1">
            <IconButton name="detail" label="Podrobnosti" />
            <IconButton name="handWin" label="Nastavení" />
          </div>
        </Group>
      </div>
    </div>
  );
}

function CombinationDialog() {
  return (
    <div
      role="dialog"
      aria-label="Upravit zatěžovací stavy a kombinace"
      className="absolute top-[76px] right-[225px] bottom-[43px] left-[119px] flex flex-col border border-[#6b6b6b] bg-[#f0f0f0] text-black shadow-[0_3px_18px_rgba(0,0,0,0.5)]"
    >
      <div className="flex h-[29px] shrink-0 items-center justify-between bg-white pr-[9px] pl-2">
        <h2 className="text-[11px]">Upravit zatěžovací stavy a kombinace</h2>
        <button aria-label="Zavřít">
          <svg viewBox="0 0 12 12" className="w-3" stroke="#111" strokeWidth="1.200">
            <path d="M1 1l10 10M11 1L1 11" />
          </svg>
        </button>
      </div>
      <div className="flex min-h-0 flex-1 flex-col pt-[7px] pr-2 pl-[6px]">
        <div className="pl-[2px]">
          <Tabs items={["Zatěžovací stavy", "Kombinace zatížení", "Kombinace výsledků"]} active="Kombinace zatížení" />
        </div>
        <div className="flex min-h-0 flex-1 gap-[7px] border border-[#dcdcdc] bg-white pt-[9px] pr-[7px] pb-2 pl-2">
          <CombinationList />
          <div className="flex min-w-0 flex-1 flex-col">
            <div className="mb-[9px] flex h-[45px] shrink-0 gap-2">
              <Group title="KZ č." className="w-[97px] shrink-0">
                <input
                  aria-label="KZ č."
                  defaultValue="1"
                  disabled
                  className="ml-[2px] h-5 w-[45px] border border-[#cccccc] bg-white pr-[5px] text-right text-[11px] text-[#838383]"
                />
              </Group>
              <Group title="Označení kombinace zatížení" className="flex-1">
                <Combo label="Barva kombinace" swatch className="ml-[2px] w-[50px]" />
                <Combo label="Označení kombinace zatížení" className="mr-1 ml-[7px] flex-1" />
              </Group>
              <Group title="Vypočítat" className="w-[162px] shrink-0">
                <span className="relative ml-[2px] flex h-[13px] w-[13px]">
                  <input
                    type="checkbox"
                    defaultChecked
                    aria-label="Vypočítat"
                    className="peer h-[13px] w-[13px] appearance-none border border-[#333] bg-white"
                  />
                  <svg
                    viewBox="0 0 13 13"
                    fill="none"
                    className="pointer-events-none absolute hidden w-[13px] peer-checked:block"
                  >
                    <path d="M2.500 6.500l3 3L11 3.500" stroke="#333" strokeWidth="1.300" />
                  </svg>
                </span>
              </Group>
            </div>
            <Tabs items={["Obecné", "Parametry výpočtu"]} active="Obecné" />
            <GeneralPage />
          </div>
        </div>
      </div>
      <div className="flex shrink-0 items-center gap-[5px] pt-[11px] pr-[7px] pb-[7px] pl-[7px]">
        <IconButton name="help" label="Nápověda" />
        <span className="w-0" />
        <IconButton name="openDlg" label="Načíst" />
        <IconButton name="saveDlg" label="Uložit" />
        <button className="mr-[5px] ml-auto h-[21px] w-[73px] border-2 border-[#0078d7] bg-[#e1e1e1] text-[11px] leading-none">
          OK
        </button>
        <button className="h-[21px] w-[73px] border border-[#adadad] bg-[#e1e1e1] text-[11px] leading-none">
          Storno
        </button>
      </div>
      <svg viewBox="0 0 12 12" className="absolute right-0 bottom-0 w-3" stroke="#9a9a9a" aria-hidden="true">
        <path d="M1 12L12 1M5 12l7-7M9 12l3-3" />
      </svg>
    </div>
  );
}

/* ---------- window ---------- */

const MODES = [
  ["UCHOP", "w-[46px]"],
  ["RASTR", "w-[41px]"],
  ["KARTEZ", "w-[50px]"],
  ["OUCHOP", "w-[55px]"],
  ["VLINIE", "w-[40px]"],
  ["DXF", "w-[28px]"],
];

function StatusBar() {
  return (
    <footer className="flex h-[21px] shrink-0 items-center border-t border-[#8d93a0] bg-linear-to-b from-[#d5d9e1] via-[#a9afba] to-[#b9bec8] text-[11px] text-[#222]">
      <span className="w-[526px] shrink-0 pl-1">Hotovo</span>
      <div className="flex gap-[2px]">
        {MODES.map(([m, width]) => (
          <button
            key={m}
            className={clsx(
              "h-[18px] border pl-[2px] text-left leading-none",
              width,
              m === "RASTR"
                ? "border-[#e4e7ee] border-r-[#8a8f9b] border-b-[#8a8f9b] pb-[2px]"
                : "border-black border-r-white border-b-white",
            )}
          >
            {m}
          </button>
        ))}
      </div>
      <span className="mr-[188px] ml-px h-[17px] w-px bg-[#8a8f9b]" />
      <span className="mr-[87px] h-[17px] w-px bg-[#8a8f9b]" />
      <span className="mr-[73px] h-[17px] w-px bg-[#8a8f9b]" />
      <span className="mr-[73px] h-[17px] w-px bg-[#8a8f9b]" />
      <span className="h-[17px] w-px bg-[#8a8f9b]" />
      <svg viewBox="0 0 12 12" className="mt-auto ml-auto w-3" fill="#6d7380" aria-hidden="true">
        <path d="M8 1h2v2H8zM8 5h2v2H8zM4 5h2v2H4zM8 9h2v2H8zM4 9h2v2H4zM0 9h2v2H0z" />
      </svg>
    </footer>
  );
}

export default function App() {
  return (
    <div className={clsx(NOTO, "relative flex h-screen w-full overflow-hidden bg-[#d8d8d8]")}>
      <div className="flex min-w-0 flex-1 flex-col">
        <div className="flex h-[2px] shrink-0 border-b border-[#a8a8a8] bg-[#ececec]">
          <span className="h-[2px] w-[78px] bg-[#cb7a05]" />
        </div>
        <div className="flex min-h-0 flex-1 flex-col border-r-2 border-l border-[#a9afba] border-r-[#e6e6e6] bg-[#cdd2dc]">
          <TitleAndMenu />
          <MainToolbar />
          <ObjectToolbar />
          <div className="flex min-h-0 flex-1">
            <Navigator />
            <ModelView />
          </div>
          <StatusBar />
        </div>
        <div className="flex h-1 shrink-0 justify-end overflow-hidden bg-linear-to-b from-[#b5b5b5] to-[#f2f2f2] pr-[104px] text-[10px] leading-[10px] text-[#333]">
          ha@012476#
        </div>
      </div>
      <div className="flex w-[3px] shrink-0 flex-col bg-[#d0d0d0]">
        <span className="mt-[5px] h-[61px] bg-[#22306e]" />
        <span className="mt-[50px] h-[5px] bg-[#cb7a05]" />
        <span className="mt-[260px] h-9 bg-[#bdbdbd]" />
        {Array.from({ length: 7 }, (_, i) => (
          <span key={i} className="mt-12 h-[9px] border-y border-[#555]" />
        ))}
      </div>
      <CombinationDialog />
    </div>
  );
}
